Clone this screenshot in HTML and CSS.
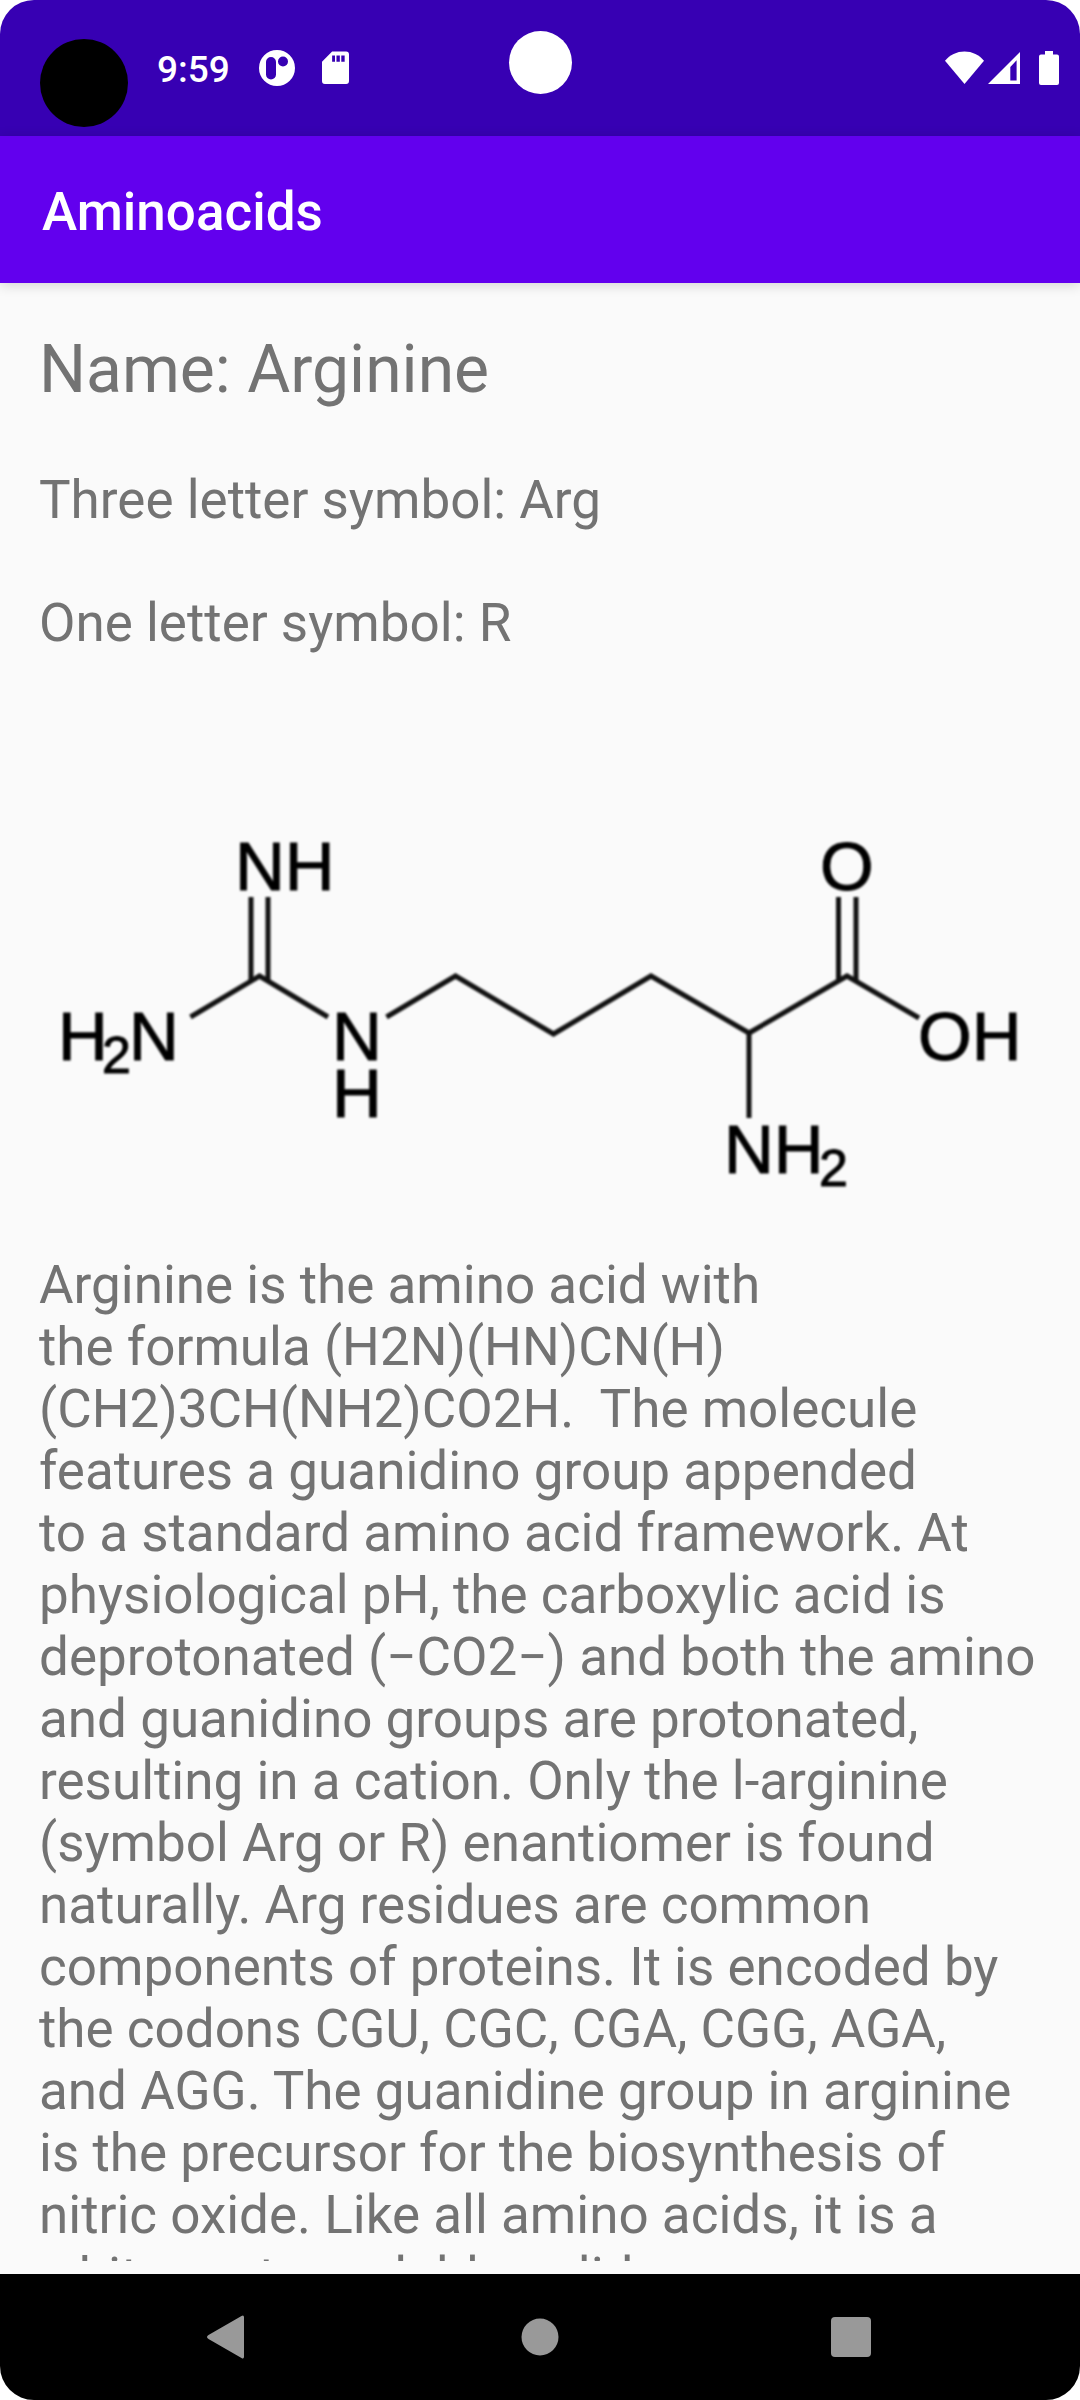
FILE: index.html
```html
<!DOCTYPE html>
<html lang="en">
<head>
<meta charset="utf-8">
<meta name="viewport" content="width=device-width, initial-scale=1">
<title>Aminoacids</title>
<link rel="stylesheet" href="styles.css">
</head>
<body>
<div class="screen">
  <div class="status-bar">
    <span class="touch-dot"></span>
    <span class="camera"></span>
    <span class="clock">9:59</span>
    <svg class="notice-icon" viewBox="0 0 36 36" aria-hidden="true">
      <path fill="#fff" fill-rule="evenodd" d="M18 0a18 18 0 1 1 0 36a18 18 0 1 1 0-36ZM12 7a5 5 0 0 0-5 5v12.500a5 5 0 0 0 10 0V12a5 5 0 0 0-5-5ZM24 6.500a5 5 0 1 0 0 10a5 5 0 1 0 0-10Z"/>
    </svg>
    <svg class="card-icon" viewBox="0 0 28 34" aria-hidden="true">
      <path fill="#fff" fill-rule="evenodd" d="M10.500 0H25q3 0 3 3v27.500q0 3-3 3H3q-3 0-3-3V10.500ZM10.500 4v6.500h3V4ZM15 4v6.500h3.500V4ZM20 4v6.500h3.500V4Z"/>
    </svg>
    <div class="system-icons">
      <svg class="wifi-icon" viewBox="0 0 40 34" aria-hidden="true">
        <path fill="#fff" d="M0 9.500C5 3.500 12 0 20 0s15 3.500 20 9.500L20 33.500Z"/>
      </svg>
      <svg class="signal-icon" viewBox="0 0 33 34" aria-hidden="true">
        <path fill="#fff" fill-rule="evenodd" d="M33 .5V33.500H0ZM23 16v14h6.500V9Z"/>
      </svg>
      <svg class="battery-icon" viewBox="0 0 20 34" aria-hidden="true">
        <path fill="#fff" d="M6 0h8v3.500h4q2 0 2 2V32q0 2-2 2H2q-2 0-2-2V5.500q0-2 2-2h4Z"/>
      </svg>
    </div>
  </div>

  <header class="app-bar">
    <h1 class="app-title">Aminoacids</h1>
  </header>

  <main class="content">
    <h2 class="name">Name: Arginine</h2>
    <p class="text">Three letter symbol: Arg</p>
    <p class="text">One letter symbol: R</p>
    <svg class="structure" viewBox="39 715 1002 478" role="img" aria-label="Structural formula of arginine">
      <g class="bonds">
        <path d="M251 897V981M268 897V981"/>
        <path d="M190.500 1017L259.500 976L328 1017"/>
        <path d="M386.500 1017L455.500 976L553.500 1034L651 976L749 1033L847 976L919 1018"/>
        <path d="M749 1033V1118"/>
        <path d="M838.500 897V981M856 897V981"/>
      </g>
      <g class="atoms">
        <text x="235" y="890">NH</text>
        <text x="58" y="1060">H</text>
        <text class="sub" x="102" y="1073">2</text>
        <text x="129" y="1060">N</text>
        <text x="332" y="1060">N</text>
        <text x="332" y="1117">H</text>
        <text x="820" y="890">O</text>
        <text x="918" y="1060">OH</text>
        <text x="724" y="1173">NH</text>
        <text class="sub" x="819" y="1186">2</text>
      </g>
    </svg>
    <p class="text">Arginine is the amino acid with the&nbsp;formula&nbsp;(H2N)(HN)CN(H)<wbr>(CH2)3CH(NH2)CO2H.&nbsp; The molecule features a guanidino group appended to&nbsp;a&nbsp;standard amino acid framework. At physiological pH, the carboxylic acid is deprotonated (−CO2−) and both the amino and guanidino groups are protonated, resulting in a cation. Only the l-arginine (symbol Arg or R) enantiomer is found naturally. Arg residues are common components of proteins. It is encoded by the codons CGU, CGC, CGA, CGG, AGA, and&nbsp;AGG. The guanidine group in arginine is the precursor for the biosynthesis of nitric oxide. Like all amino acids, it is a white, water-soluble solid.</p>
  </main>

  <nav class="nav-bar" aria-label="System navigation">
    <button class="nav-button" type="button" aria-label="Back">
      <svg class="nav-icon" viewBox="0 0 48 48" aria-hidden="true"><path d="M36.500 3Q39 1.500 39 4.500V43.500Q39 46.500 36.500 45L3.500 26Q0.500 24 3.500 22Z"/></svg>
    </button>
    <button class="nav-button" type="button" aria-label="Home">
      <svg class="nav-icon" viewBox="0 0 48 48" aria-hidden="true"><circle cx="24" cy="24" r="18.500"/></svg>
    </button>
    <button class="nav-button" type="button" aria-label="Recent apps">
      <svg class="nav-icon" viewBox="0 0 48 48" aria-hidden="true"><rect x="4" y="4" width="40" height="40" rx="4"/></svg>
    </button>
  </nav>
</div>
</body>
</html>
```
FILE: styles.css
```css
* {
  box-sizing: border-box;
}

body {
  margin: 0;
  background: #fff;
  font-family: Roboto, "Liberation Sans", sans-serif;
}

.screen {
  display: flex;
  flex-direction: column;
  height: 100vh;
  overflow: hidden;
  border-radius: 34px;
  background: #fafafa;
}

.status-bar {
  position: relative;
  display: flex;
  align-items: center;
  flex: none;
  height: 136px;
  padding: 0 21px 0 157px;
  background: #3700b3;
  color: #fff;
}

.touch-dot {
  position: absolute;
  top: 39px;
  left: 40px;
  width: 88px;
  height: 88px;
  border-radius: 50%;
  background: #000;
}

.camera {
  position: absolute;
  top: 31px;
  left: calc(50% - 31px);
  width: 63px;
  height: 63px;
  border-radius: 50%;
  background: #fff;
}

.clock {
  padding-top: 3px;
  font-size: 37px;
  line-height: 44px;
  font-weight: 500;
}

.notice-icon {
  width: 36px;
  height: 36px;
  margin-left: 29px;
}

.card-icon {
  width: 27px;
  height: 34px;
  margin-left: 27px;
}

.system-icons {
  display: flex;
  margin-left: auto;
}

.wifi-icon {
  width: 39px;
  height: 34px;
}

.signal-icon {
  width: 32px;
  height: 34px;
  margin-left: 4px;
}

.battery-icon {
  width: 20px;
  height: 34px;
  margin-left: 19px;
}

.app-bar {
  position: relative;
  display: flex;
  align-items: center;
  flex: none;
  height: 147px;
  padding: 4px 42px 0;
  background: #6200ee;
  box-shadow: 0 2px 12px rgba(0, 0, 0, 0.16);
  color: #fff;
}

.app-title {
  margin: 0;
  font-size: 53px;
  line-height: 62px;
  font-weight: 500;
}

.content {
  display: flex;
  flex-direction: column;
  flex: 1;
  gap: 61px;
  min-height: 0;
  margin-bottom: 13px;
  padding: 48px 39px 0;
  overflow-y: auto;
  scrollbar-width: none;
  color: #737373;
}

.name {
  margin: 0;
  font-size: 66px;
  line-height: 77px;
  font-weight: 400;
}

.text {
  margin: 0;
  font-size: 53px;
  line-height: 62px;
}

.structure {
  flex: none;
  display: block;
  width: 100%;
  height: auto;
  filter: blur(1px);
}

.bonds {
  fill: none;
  stroke: #111;
  stroke-width: 5px;
}

.atoms {
  fill: #000;
  stroke: #000;
  stroke-width: 1px;
  font-family: "Liberation Sans", Arial, sans-serif;
  font-size: 69px;
}

.sub {
  font-size: 52px;
}

.nav-bar {
  display: grid;
  grid-template-columns: repeat(3, 1fr);
  flex: none;
  height: 126px;
  padding: 0 74px;
  background: #000;
}

.nav-button {
  display: flex;
  align-items: center;
  justify-content: center;
  padding: 0;
  border: 0;
  background: none;
}

.nav-icon {
  width: 48px;
  height: 48px;
  fill: #999;
}
```
